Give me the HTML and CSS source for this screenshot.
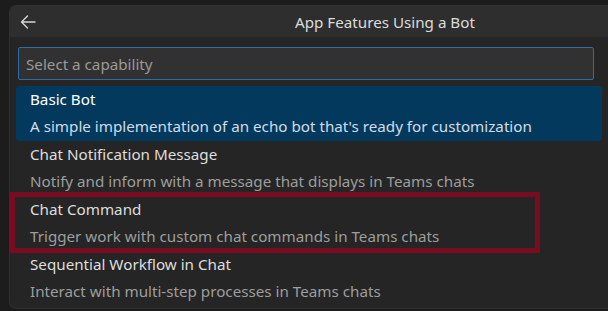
FILE: index.html
```html
<!DOCTYPE html>
<html lang="en">
<head>
    <meta charset="UTF-8">
    <title>App Features Using a Bot</title>
    <link rel="stylesheet" href="styles.css">
</head>
<body>
    <div class="panel">
        <header class="panel-header">
            <span class="back">
                <svg width="16" height="16" viewBox="0 0 16 16" fill="none" stroke="#d6d6d6" stroke-width="1.4" stroke-linecap="round" stroke-linejoin="round">
                    <path d="M15 8H1.5M7.5 2L1.5 8l6 6"/>
                </svg>
            </span>
            <h1>App Features Using a Bot</h1>
        </header>

        <div class="search">
            <input type="text" placeholder="Select a capability">
        </div>

        <ul class="options">
            <li class="option selected">
                <div class="option-title">Basic Bot</div>
                <div class="option-desc">A simple implementation of an echo bot that's ready for customization</div>
            </li>
            <li class="option">
                <div class="option-title">Chat Notification Message</div>
                <div class="option-desc">Notify and inform with a message that displays in Teams chats</div>
            </li>
            <li class="option">
                <div class="option-title">Chat Command</div>
                <div class="option-desc">Trigger work with custom chat commands in Teams chats</div>
            </li>
            <li class="option">
                <div class="option-title">Sequential Workflow in Chat</div>
                <div class="option-desc">Interact with multi-step processes in Teams chats</div>
            </li>
            <div class="highlight"></div>
        </ul>
    </div>
</body>
</html>
```

FILE: styles.css
```css
body {
    margin: 0;
    padding: 6px 0 0 10px;
    background-color: #1c1c1c;
    font-family: 'Noto Sans', 'Open Sans', sans-serif;
    overflow: hidden;
    height: 311px;
    box-sizing: border-box;
}
.panel {
    width: 598px;
    height: 302px;
    background-color: #252525;
    border-radius: 6px 0 0 6px;
    box-shadow: 0 0 0 1px #303030;
    overflow: hidden;
}
.panel-header {
    height: 31px;
    background-color: #2e2e2e;
    display: flex;
    align-items: center;
    padding-left: 10px;
}
.back {
    display: flex;
}
h1 {
    margin: 0 0 0 259px;
    font-size: 15.2px;
    font-weight: 400;
    color: #dcdcdc;
    white-space: nowrap;
}
.search {
    padding: 10px 0 0 8px;
}
.search input {
    display: block;
    width: 576px;
    height: 33px;
    box-sizing: border-box;
    background-color: #313131;
    border: 1px solid #2f6ea5;
    border-radius: 2px;
    padding: 0 7px;
    font-family: inherit;
    font-size: 15.2px;
    color: #ddd;
    outline: none;
}
.search input::placeholder {
    color: #9a9a9a;
}
.options {
    position: relative;
    list-style: none;
    margin: 6px 0 0 6px;
    padding: 0;
    width: 586px;
}
.option {
    height: 55px;
    padding: 0 14px;
    line-height: 27px;
    font-size: 15.2px;
    border-radius: 3px;
    white-space: nowrap;
}
.option-title {
    color: #dedede;
}
.option-desc {
    color: #9e9e9e;
}
.option.selected {
    background-color: #04395e;
}
.option.selected .option-title {
    color: #ffffff;
}
.option.selected .option-desc {
    color: #d2dde8;
}
.highlight {
    position: absolute;
    left: -6px;
    top: 106px;
    width: 530px;
    height: 61px;
    box-sizing: border-box;
    border: 5px solid #7a0c22;
}
```
